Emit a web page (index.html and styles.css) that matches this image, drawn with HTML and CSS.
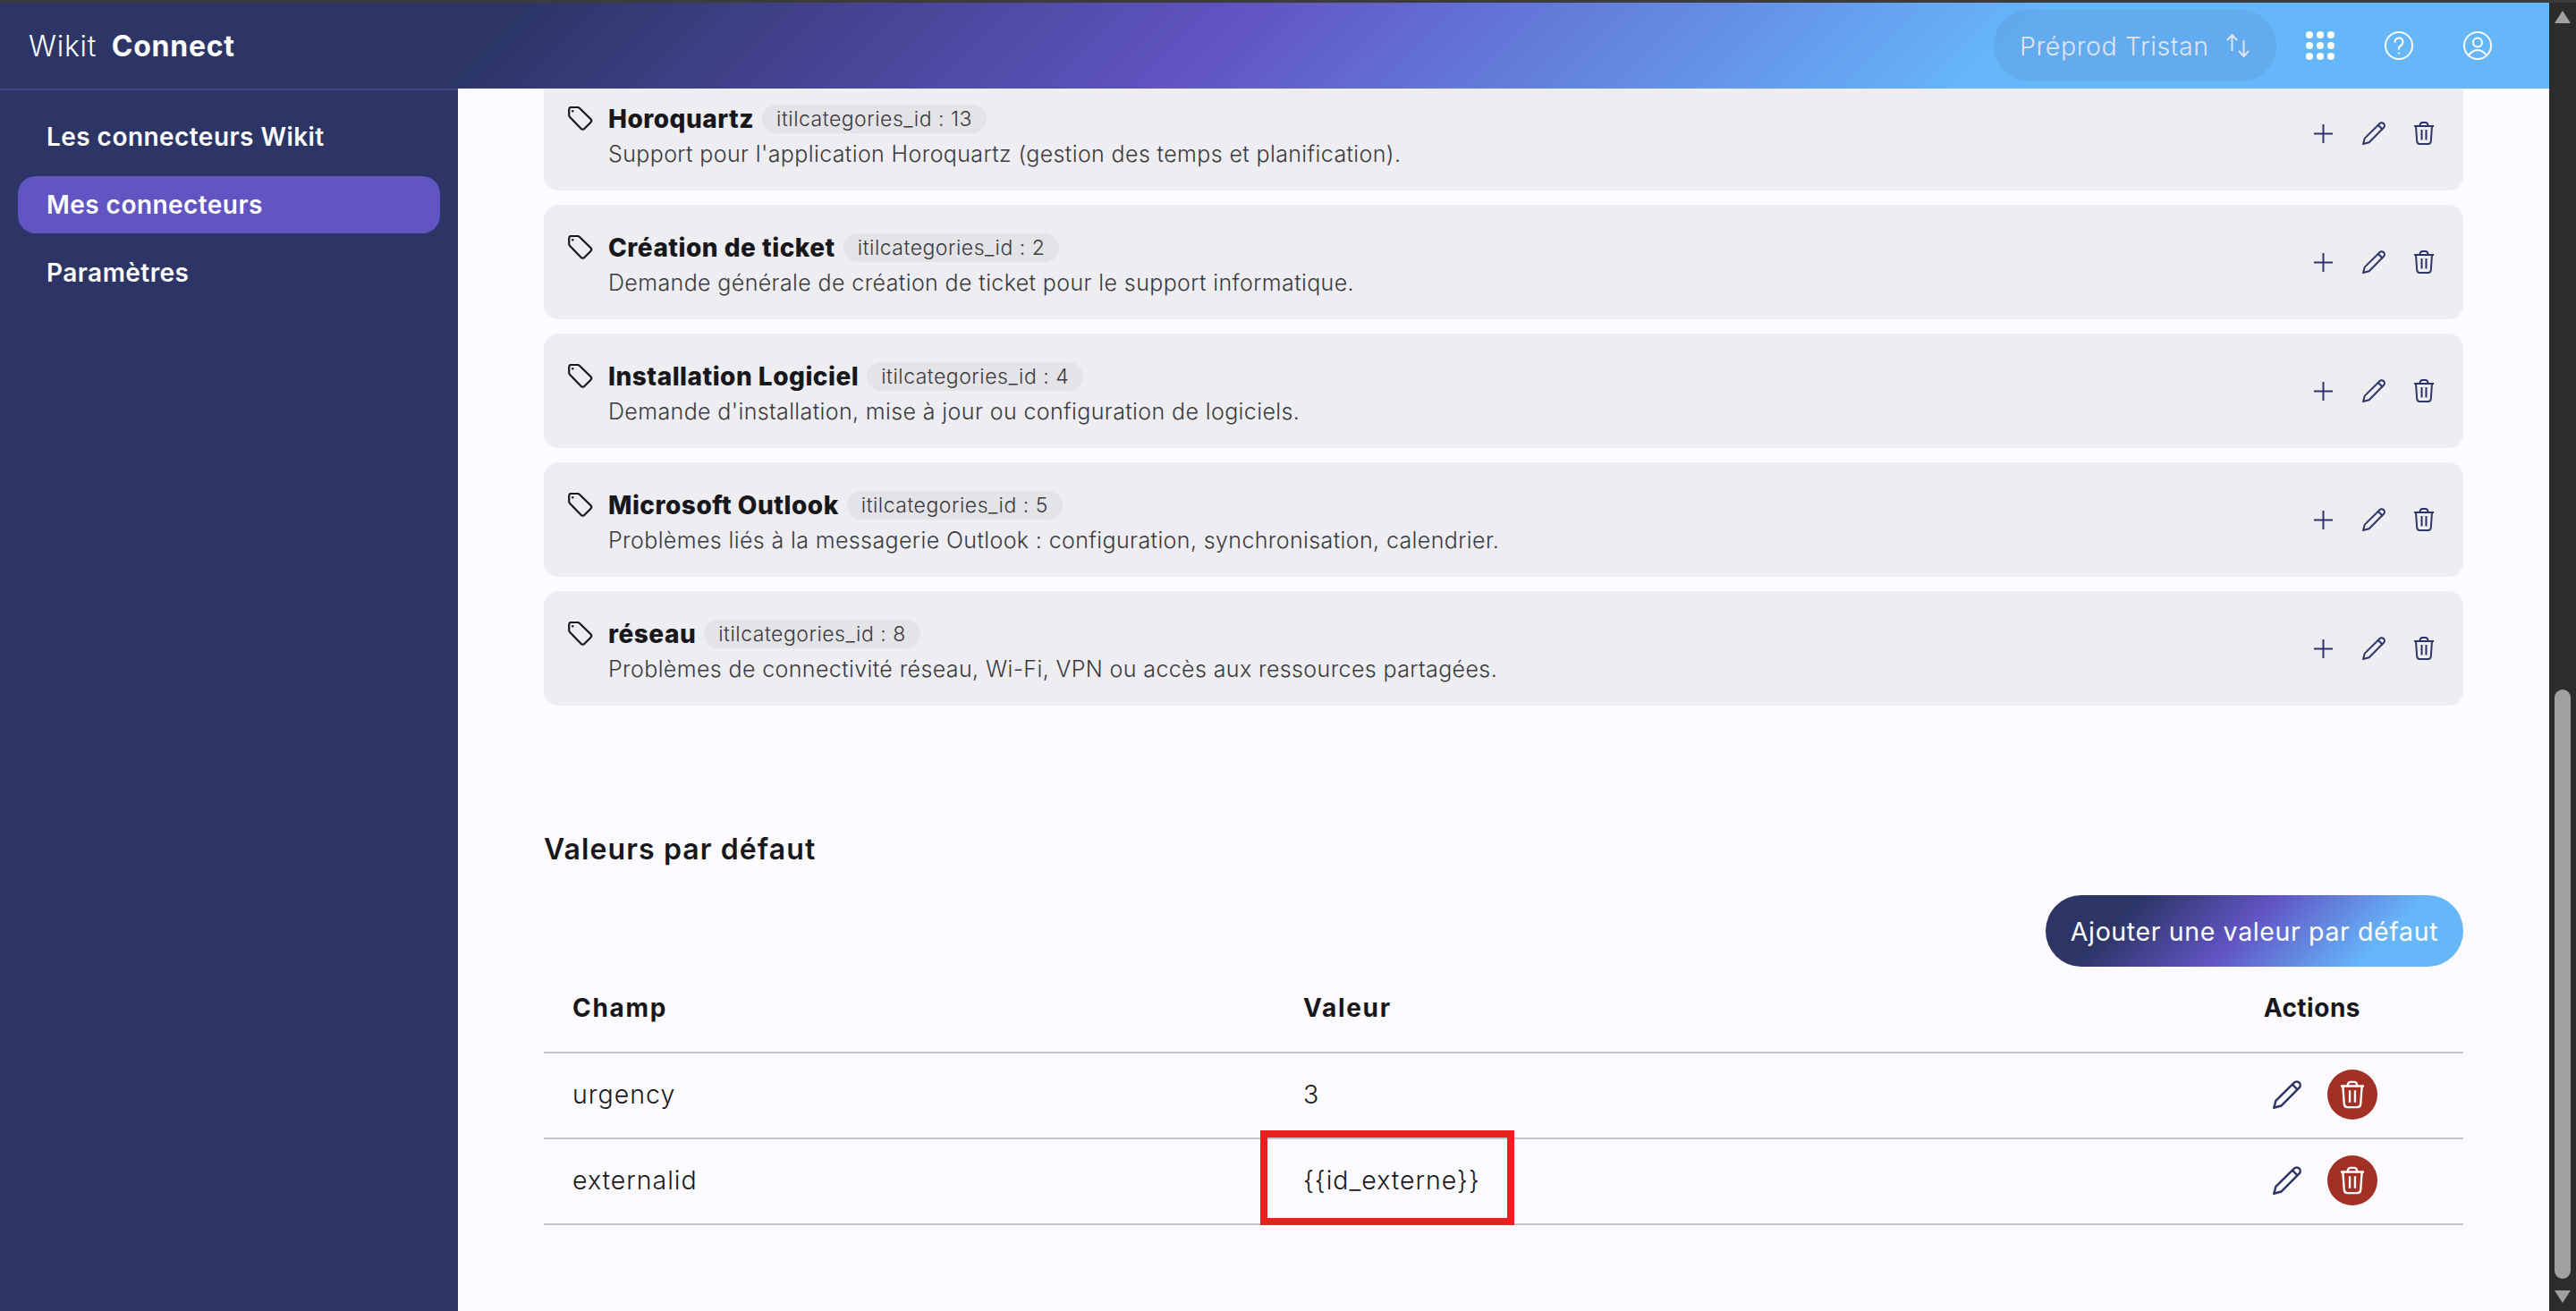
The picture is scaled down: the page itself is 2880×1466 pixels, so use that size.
FILE: index.html
```html
<!DOCTYPE html>
<html lang="fr">
<head>
  <meta charset="UTF-8" />
  <title>Wikit Connect</title>
  <link rel="stylesheet" href="styles.css">
</head>
<body>

  <!-- Icons -->
  <svg class="sprite" xmlns="http://www.w3.org/2000/svg">
    <symbol id="i-tag" viewBox="0 0 28 27">
      <path d="M1.2 3.500V9.500Q1.200 11 2.200 12L14.500 24.800Q16.500 26.500 18.500 24.800L25.500 17.800Q27 16 25.500 14.200L13 2Q12 1 10.500 1H3.500Q1.200 1 1.200 3.500Z" fill="none" stroke="currentColor" stroke-width="2.200"/>
      <circle cx="5.200" cy="5.200" r="1.200" fill="currentColor"/>
    </symbol>
    <symbol id="i-plus" viewBox="0 0 21 21">
      <path d="M10.5 0V21M0 10.5H21" fill="none" stroke="currentColor" stroke-width="2"/>
    </symbol>
    <symbol id="i-pen" viewBox="0 0 26 26">
      <path d="M1 25L2.8 18.6 19.4 2.2A3 3 0 0 1 24 6.8L7.6 23.2ZM18 4L22.2 8.2" fill="none" stroke="currentColor" stroke-width="2" stroke-linejoin="round"/>
    </symbol>
    <symbol id="i-trash" viewBox="0 0 22 26">
      <path d="M0 5H22M6.5 5Q6.5 1 9.5 1H12.5Q15.500 1 15.500 5M2 5L3.200 22Q3.500 25 6.500 25H15.500Q18.500 25 18.800 22L20 5M8.500 9V20.500M13.500 9V20.500" fill="none" stroke="currentColor" stroke-width="2"/>
    </symbol>
  </svg>

  <div class="window">
    <div class="page">

      <header class="topbar">
        <div class="logo">Wikit <strong>Connect</strong></div>
        <div class="topbar-right">
          <button class="env-switch">
            <span>Préprod Tristan</span>
            <svg class="env-arrows" viewBox="0 0 26 26"><path d="M6.500 19V1M1 7L6.500 1 12 7M19.500 7V25M14 19L19.500 25 25 19" fill="none" stroke="currentColor" stroke-width="2"/></svg>
          </button>
          <svg class="top-icon" viewBox="0 0 32 32" fill="#fff">
            <circle cx="4" cy="4" r="4"/><circle cx="16" cy="4" r="4"/><circle cx="28" cy="4" r="4"/>
            <circle cx="4" cy="16" r="4"/><circle cx="16" cy="16" r="4"/><circle cx="28" cy="16" r="4"/>
            <circle cx="4" cy="28" r="4"/><circle cx="16" cy="28" r="4"/><circle cx="28" cy="28" r="4"/>
          </svg>
          <svg class="top-icon" viewBox="0 0 32 32" fill="none" stroke="#fff" stroke-width="2">
            <circle cx="16" cy="16" r="15"/>
            <path d="M11.500 12.500Q11.500 7.500 16 7.500T20.500 12Q20.500 14.500 18 16.200T16 20.500"/>
            <circle cx="16" cy="24.500" r="1.100" fill="#fff" stroke="none"/>
          </svg>
          <svg class="top-icon" viewBox="0 0 32 32" fill="none" stroke="#fff" stroke-width="2">
            <circle cx="16" cy="16" r="15"/>
            <circle cx="16" cy="12.500" r="5"/>
            <path d="M6 26.500Q16 15.500 26 26.500"/>
          </svg>
        </div>
      </header>

      <div class="body-row">
        <nav class="sidebar">
          <a class="nav-item">Les connecteurs Wikit</a>
          <a class="nav-item active">Mes connecteurs</a>
          <a class="nav-item">Paramètres</a>
        </nav>

        <main class="content">
          <div class="content-inner">

            <div class="category-list">
              <div class="category">
                <svg class="tag-icon"><use href="#i-tag"/></svg>
                <div class="category-text">
                  <div class="category-head">
                    <span class="category-name">Horoquartz</span>
                    <span class="chip">itilcategories_id : 13</span>
                  </div>
                  <p>Support pour l'application Horoquartz (gestion des temps et planification).</p>
                </div>
                <div class="category-actions">
                  <svg class="ic-plus"><use href="#i-plus"/></svg>
                  <svg class="ic-pen"><use href="#i-pen"/></svg>
                  <svg class="ic-trash"><use href="#i-trash"/></svg>
                </div>
              </div>

              <div class="category">
                <svg class="tag-icon"><use href="#i-tag"/></svg>
                <div class="category-text">
                  <div class="category-head">
                    <span class="category-name">Création de ticket</span>
                    <span class="chip">itilcategories_id : 2</span>
                  </div>
                  <p>Demande générale de création de ticket pour le support informatique.</p>
                </div>
                <div class="category-actions">
                  <svg class="ic-plus"><use href="#i-plus"/></svg>
                  <svg class="ic-pen"><use href="#i-pen"/></svg>
                  <svg class="ic-trash"><use href="#i-trash"/></svg>
                </div>
              </div>

              <div class="category">
                <svg class="tag-icon"><use href="#i-tag"/></svg>
                <div class="category-text">
                  <div class="category-head">
                    <span class="category-name">Installation Logiciel</span>
                    <span class="chip">itilcategories_id : 4</span>
                  </div>
                  <p>Demande d'installation, mise à jour ou configuration de logiciels.</p>
                </div>
                <div class="category-actions">
                  <svg class="ic-plus"><use href="#i-plus"/></svg>
                  <svg class="ic-pen"><use href="#i-pen"/></svg>
                  <svg class="ic-trash"><use href="#i-trash"/></svg>
                </div>
              </div>

              <div class="category">
                <svg class="tag-icon"><use href="#i-tag"/></svg>
                <div class="category-text">
                  <div class="category-head">
                    <span class="category-name">Microsoft Outlook</span>
                    <span class="chip">itilcategories_id : 5</span>
                  </div>
                  <p>Problèmes liés à la messagerie Outlook : configuration, synchronisation, calendrier.</p>
                </div>
                <div class="category-actions">
                  <svg class="ic-plus"><use href="#i-plus"/></svg>
                  <svg class="ic-pen"><use href="#i-pen"/></svg>
                  <svg class="ic-trash"><use href="#i-trash"/></svg>
                </div>
              </div>

              <div class="category">
                <svg class="tag-icon"><use href="#i-tag"/></svg>
                <div class="category-text">
                  <div class="category-head">
                    <span class="category-name">réseau</span>
                    <span class="chip">itilcategories_id : 8</span>
                  </div>
                  <p>Problèmes de connectivité réseau, Wi-Fi, VPN ou accès aux ressources partagées.</p>
                </div>
                <div class="category-actions">
                  <svg class="ic-plus"><use href="#i-plus"/></svg>
                  <svg class="ic-pen"><use href="#i-pen"/></svg>
                  <svg class="ic-trash"><use href="#i-trash"/></svg>
                </div>
              </div>
            </div>

            <h2 class="section-title">Valeurs par défaut</h2>

            <div class="section-toolbar">
              <button class="gradient-btn">Ajouter une valeur par défaut</button>
            </div>

            <table class="defaults">
              <thead>
                <tr>
                  <th class="col-field">Champ</th>
                  <th class="col-value">Valeur</th>
                  <th class="col-actions">Actions</th>
                </tr>
              </thead>
              <tbody>
                <tr>
                  <td>urgency</td>
                  <td>3</td>
                  <td class="row-actions">
                    <svg class="ic-pen-lg"><use href="#i-pen"/></svg>
                    <span class="delete-btn"><svg class="ic-trash-lg"><use href="#i-trash"/></svg></span>
                  </td>
                </tr>
                <tr>
                  <td>externalid</td>
                  <td class="highlighted">{{id_externe}}<span class="red-box"></span></td>
                  <td class="row-actions">
                    <svg class="ic-pen-lg"><use href="#i-pen"/></svg>
                    <span class="delete-btn"><svg class="ic-trash-lg"><use href="#i-trash"/></svg></span>
                  </td>
                </tr>
              </tbody>
            </table>

          </div>
        </main>
      </div>
    </div>

    <!-- Browser scrollbar -->
    <div class="scrollbar">
      <span class="arrow-up"></span>
      <span class="thumb"></span>
      <span class="arrow-down"></span>
    </div>
  </div>

</body>
</html>
```

FILE: styles.css
```css
:root {
  --navy: #2c3566;
  --purple: #6155c4;
  --sky: #66b6fa;
  --page-bg: #fdfbff;
  --card-bg: #eeeef2;
  --line: #c6c4cb;
  --text: #17171c;
  --brand-gradient: linear-gradient(135deg, #2c3566 20%, #6155c4 48%, #66b6fa 78%);
}

* {
  box-sizing: border-box;
}

html, body {
  height: 100%;
}

body {
  margin: 0;
  font-family: 'Inter', 'Noto Sans', sans-serif;
  color: var(--text);
  background: #3c3c3c;
  padding-top: 3px;
  overflow: hidden;
}

.sprite {
  width: 0;
  height: 0;
  position: absolute;
}

.window {
  display: flex;
  height: 100%;
}

.page {
  flex: 1;
  min-width: 0;
  display: flex;
  flex-direction: column;
  background: var(--page-bg);
}

/* Header */
.topbar {
  height: 96px;
  flex: none;
  display: flex;
  align-items: center;
  justify-content: space-between;
  padding: 0 64px 0 32px;
  background: var(--brand-gradient);
  color: #fff;
}

.logo {
  font-size: 32px;
  font-weight: 300;
  letter-spacing: 0.75px;
  word-spacing: 7px;
}

.logo strong {
  font-weight: 700;
}

.topbar-right {
  display: flex;
  align-items: center;
  gap: 56px;
}

.env-switch {
  display: flex;
  align-items: center;
  gap: 19px;
  height: 80px;
  width: 316px;
  margin-right: -23px;
  padding: 0 29px;
  border: none;
  border-radius: 40px;
  background: rgba(44, 53, 102, 0.08);
  color: #e2e4ee;
  font: 300 28.500px 'Inter', sans-serif;
  letter-spacing: 0.6px;
  white-space: nowrap;
}

.env-arrows {
  width: 26px;
  height: 26px;
  flex: none;
}

.top-icon {
  width: 32px;
  height: 32px;
  flex: none;
}

/* Sidebar + content */
.body-row {
  flex: 1;
  min-height: 0;
  display: flex;
}

.sidebar {
  width: 512px;
  flex: none;
  display: flex;
  flex-direction: column;
  padding: 20px 20px;
  background: var(--navy);
  border-top: 2px solid #3e4a85;
  color: #fff;
}

.nav-item {
  height: 64px;
  margin-bottom: 12px;
  padding-left: 32px;
  display: flex;
  align-items: center;
  border-radius: 20px;
  font-size: 28px;
  font-weight: 600;
  letter-spacing: 0.45px;
}

.nav-item.active {
  background: var(--purple);
}

.content {
  flex: 1;
  min-width: 0;
  overflow: hidden;
}

/* the page is scrolled: the first card runs under the header */
.content-inner {
  margin-top: -14px;
  padding: 0 96px;
}

.category-list {
  display: flex;
  flex-direction: column;
  gap: 16px;
}

.category {
  height: 128px;
  display: flex;
  align-items: center;
  padding: 0 33px 0 27px;
  background: var(--card-bg);
  border-radius: 16px;
}

.tag-icon {
  width: 28px;
  height: 27px;
  flex: none;
  margin: -33px 17px 0 0;
  color: #17171c;
}

.category-text {
  flex: 1;
  min-width: 0;
  margin-top: 4px;
}

.category-head {
  display: flex;
  align-items: center;
  gap: 9px;
  height: 34px;
}

.category-name {
  font-size: 28px;
  font-weight: 800;
  letter-spacing: 0.5px;
}

.chip {
  height: 32px;
  display: flex;
  align-items: center;
  padding: 0 16px;
  border-radius: 16px;
  background: #e4e4e8;
  color: #3a3a40;
  font-size: 23px;
  font-weight: 300;
  letter-spacing: 0.5px;
}

.category p {
  margin: 7px 0 0;
  font-size: 25px;
  font-weight: 300;
  letter-spacing: 0.38px;
  color: #3a3a40;
}

.category-actions {
  display: flex;
  align-items: center;
  color: var(--navy);
}

.ic-plus {
  width: 21px;
  height: 21px;
  margin-right: 33px;
}

.ic-pen {
  width: 26px;
  height: 26px;
  margin-right: 32px;
}

.ic-trash {
  width: 22px;
  height: 26px;
}

/* Default values */
.section-title {
  margin: 137px 0 0;
  font-size: 32px;
  line-height: 48px;
  font-weight: 600;
  letter-spacing: 1.1px;
}

.section-toolbar {
  display: flex;
  justify-content: flex-end;
  margin-top: 27px;
}

.gradient-btn {
  height: 80px;
  width: 467px;
  border: none;
  border-radius: 40px;
  background: var(--brand-gradient);
  color: #fff;
  font: 400 28.500px 'Inter', sans-serif;
  letter-spacing: 0.63px;
  white-space: nowrap;
}

.defaults {
  width: 100%;
  table-layout: fixed;
  border-collapse: collapse;
}

.defaults th {
  height: 96px;
  padding: 0 32px 4px;
  text-align: left;
  font-size: 28px;
  font-weight: 700;
  letter-spacing: 1.7px;
  border-bottom: 2px solid var(--line);
}

.col-field {
  width: 817px;
}

.defaults th.col-actions {
  width: 500px;
  padding-right: 115px;
  text-align: right;
  letter-spacing: 0.5px;
}

.defaults td {
  height: 96px;
  padding: 0 32px 4px;
  font-size: 28.500px;
  font-weight: 300;
  letter-spacing: 1px;
  border-bottom: 2px solid var(--line);
}

.defaults td.row-actions {
  padding: 0 96px 2px 32px;
  text-align: right;
  font-size: 0;
  color: var(--navy);
}

.row-actions > * {
  vertical-align: middle;
}

.ic-pen-lg {
  width: 32px;
  height: 32px;
  margin-right: 28px;
}

.delete-btn {
  display: inline-flex;
  align-items: center;
  justify-content: center;
  width: 56px;
  height: 56px;
  border-radius: 50%;
  background: #a33025;
  color: #fff;
}

.ic-trash-lg {
  width: 26px;
  height: 32px;
}

.highlighted {
  position: relative;
}

/* annotation drawn over the screenshot */
.red-box {
  position: absolute;
  left: -16px;
  top: -10px;
  width: 284px;
  height: 106px;
  border: 8px solid #e82020;
}

/* Scrollbar */
.scrollbar {
  width: 30px;
  flex: none;
  display: flex;
  flex-direction: column;
  align-items: center;
  background: #2c2c2c;
}

.arrow-up, .arrow-down {
  width: 0;
  height: 0;
  border-left: 9px solid transparent;
  border-right: 9px solid transparent;
}

.arrow-up {
  margin-top: 9px;
  border-bottom: 14px solid #a0a0a0;
}

.thumb {
  width: 18px;
  height: 659px;
  margin-top: auto;
  background: #a0a0a0;
  border-radius: 9px;
}

.arrow-down {
  margin: 13px 0 9px;
  border-top: 14px solid #a0a0a0;
}
```
